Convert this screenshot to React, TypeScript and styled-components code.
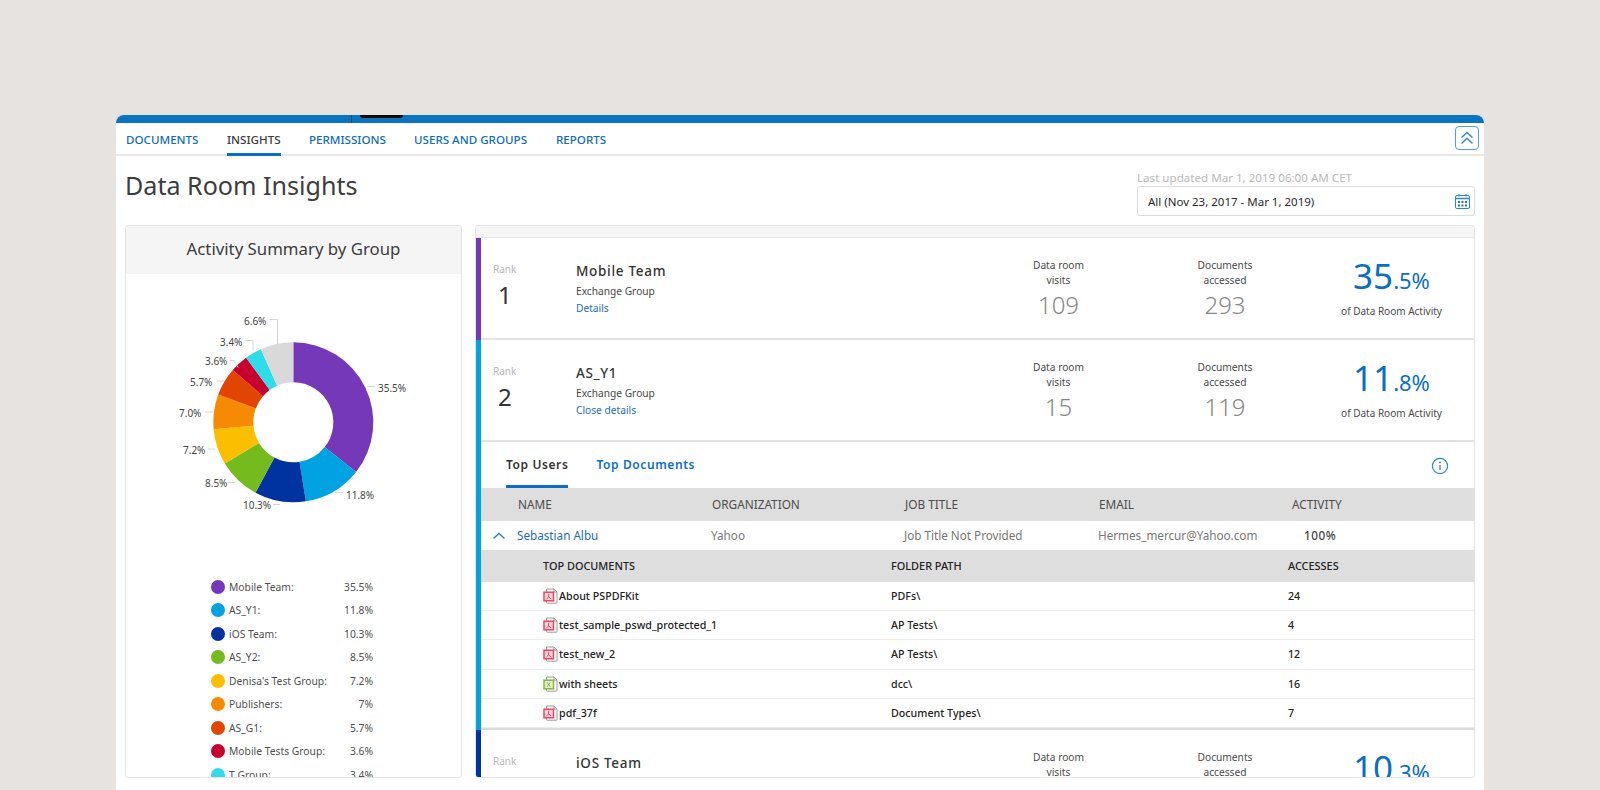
import React from "react";
import styled, { createGlobalStyle } from "styled-components";

const Global = createGlobalStyle`
  html, body { margin: 0; padding: 0; height: 790px; overflow: hidden; background: #e6e3e0; }
  body { font-family: "Noto Sans", "Open Sans", sans-serif; -webkit-font-smoothing: antialiased; }
  * { box-sizing: border-box; }
`;

const Page = styled.div`
  padding: 115px 116px 0;
  height: 790px;
`;
const Window = styled.div`
  position: relative;
  height: 675px;
  background: #fff;
  border-radius: 8px 8px 0 0;
  overflow: hidden;
`;
const TopBar = styled.div`
  position: relative;
  height: 8px;
  background: #0a74c0;
`;
const CameraNotch = styled.div`
  position: absolute;
  left: 244px;
  top: 0;
  width: 43px;
  height: 3px;
  background: #0b0b0b;
  border-radius: 0 0 3px 3px;
`;
const BarSeam = styled.div`
  position: absolute;
  left: 235px;
  top: 0;
  width: 1px;
  height: 8px;
  background: #0a4f80;
`;
const Nav = styled.nav`
  display: flex;
  align-items: stretch;
  height: 33px;
  padding: 0 5px 0 10px;
  border-bottom: 2px solid #e9e9e9;
`;
const NavLink = styled.a<{ $active?: boolean; $w: number }>`
  display: flex;
  align-items: center;
  height: 33px;
  width: ${(p) => p.$w}px;
  font-size: 11.6px;
  font-weight: 500;
  white-space: nowrap;
  color: ${(p) => (p.$active ? "#3c3c3c" : "#0e6cb8")};
`;
const NavLabel = styled.span<{ $active?: boolean }>`
  display: flex;
  align-items: center;
  height: 32px;
  margin-bottom: -1px;
  border-bottom: 3px solid ${(p) => (p.$active ? "#0a6fc2" : "transparent")};
  padding-top: 1px;
`;
const CollapseButton = styled.button`
  margin: 3px 0 0 auto;
  width: 24px;
  height: 24px;
  padding: 0;
  display: flex;
  align-items: center;
  justify-content: center;
  background: #fff;
  border: 1px solid #4f9fd9;
  border-radius: 4px;
`;
const Content = styled.div`
  padding: 0 9px;
`;
const TitleRow = styled.div`
  display: flex;
  justify-content: space-between;
  height: 69px;
`;
const Title = styled.h1`
  margin: 11px 0 0;
  font-size: 25.1px;
  line-height: 36px;
  font-weight: 400;
  color: #3d3d3d;
`;
const DateBlock = styled.div`
  width: 338px;
  padding-top: 14px;
`;
const Updated = styled.div`
  font-size: 11.6px;
  line-height: 16px;
  color: #b9b9b9;
`;
const DateField = styled.div`
  display: flex;
  align-items: center;
  justify-content: space-between;
  height: 30px;
  padding: 0 3px 0 10px;
  border: 1px solid #dcdcdc;
  border-radius: 3px;
  font-size: 11.5px;
  color: #2a2a2a;
`;
const Columns = styled.div`
  display: grid;
  grid-template-columns: 337px 1000px;
  column-gap: 13px;
`;
const LeftCard = styled.section`
  height: 553px;
  overflow: hidden;
  border: 1px solid #e4e4e4;
  border-radius: 3px;
`;
const CardHeader = styled.h2`
  margin: 0;
  height: 48px;
  padding-bottom: 4px;
  display: flex;
  align-items: center;
  justify-content: center;
  background: #f6f5f5;
  font-size: 16.8px;
  font-weight: 400;
  color: #3c3c3c;
`;
const ChartSvg = styled.svg`
  display: block;
  width: 335px;
  height: 301px;
`;
const Legend = styled.ul`
  list-style: none;
  margin: 0;
  padding: 0 0 0 85px;
`;
const LegendRow = styled.li`
  display: flex;
  align-items: center;
  width: 162px;
  height: 23.5px;
  font-size: 10.3px;
  color: #505050;
  white-space: nowrap;
`;
const Dot = styled.span<{ $c: string }>`
  flex: none;
  width: 14px;
  height: 14px;
  margin-right: 4px;
  border-radius: 50%;
  background: ${(p) => p.$c};
`;
const LegendValue = styled.span`
  margin-left: auto;
`;
const RightCard = styled.section`
  height: 553px;
  overflow: hidden;
  border: 1px solid #e4e4e4;
  border-radius: 3px;
  background: #fff;
`;
const RightStrip = styled.div`
  height: 12px;
  background: #f6f5f5;
  border-bottom: 1px solid #e8e8e8;
`;
const Group = styled.div<{ $c: string }>`
  border-left: 5px solid ${(p) => p.$c};
`;
const Row = styled.div`
  display: grid;
  grid-template-columns: 83px 400px 165px 168px 1fr;
  height: 102px;
  padding-left: 12px;
  border-bottom: 2px solid #e3e3e3;
`;
const RankCell = styled.div`
  padding-top: 24px;
`;
const RankLabel = styled.div`
  font-size: 10px;
  line-height: 15px;
  color: #b8b8b8;
`;
const RankValue = styled.div`
  font-size: 24px;
  line-height: 33px;
  margin: 1px 0 0 5px;
  color: #333;
`;
const NameCell = styled.div`
  padding-top: 23px;
`;
const TeamName = styled.div`
  font-size: 13.5px;
  line-height: 20px;
  font-weight: 500;
  letter-spacing: 0.7px;
  color: #333;
`;
const TeamKind = styled.div`
  font-size: 10.2px;
  line-height: 17px;
  margin-top: 2px;
  color: #484848;
`;
const DetailsLink = styled.a`
  display: block;
  font-size: 10.2px;
  line-height: 17px;
  color: #1a6db5;
`;
const StatCell = styled.div`
  padding-top: 20px;
  text-align: center;
`;
const StatLabel = styled.div`
  font-size: 10.2px;
  line-height: 15px;
  color: #4a4a4a;
`;
const StatValue = styled.div`
  font-size: 24px;
  line-height: 34px;
  font-weight: 300;
  color: #878787;
`;
const PctCell = styled.div`
  padding-top: 17px;
  text-align: center;
`;
const PctValue = styled.div`
  font-size: 35px;
  line-height: 42px;
  color: #0a6fc2;
`;
const PctSmall = styled.span`
  font-size: 22px;
`;
const PctCaption = styled.div`
  margin-top: 3px;
  font-size: 10px;
  line-height: 15px;
  color: #4a4a4a;
`;
const Tabs = styled.div`
  display: flex;
  align-items: stretch;
  height: 46px;
  padding: 0 25px 0 25px;
`;
const Tab = styled.a<{ $active?: boolean }>`
  display: flex;
  align-items: center;
  margin-right: 28px;
  padding-top: 1px;
  font-size: 12px;
  font-weight: 600;
  letter-spacing: 0.6px;
  border-bottom: 3px solid ${(p) => (p.$active ? "#0a6fc2" : "transparent")};
  color: ${(p) => (p.$active ? "#333" : "#0a6fc2")};
`;
const InfoIcon = styled.svg`
  margin: 15px 0 0 auto;
`;
const UsersHead = styled.div`
  display: grid;
  grid-template-columns: 194px 193px 194px 193px 1fr;
  align-items: center;
  height: 33px;
  padding: 0 0 2px 37px;
  background: #dedede;
  font-size: 11.8px;
  color: #4c4c4c;
`;
const UsersRow = styled.div`
  display: grid;
  grid-template-columns: 194px 193px 194px 193px 1fr;
  align-items: center;
  height: 29px;
  padding: 0 0 2px 36px;
  font-size: 11.7px;
  color: #777;
`;
const UserName = styled.a`
  position: relative;
  color: #1a6db5;
`;
const Chevron = styled.svg`
  position: absolute;
  left: -25px;
  top: 4px;
`;
const ActivityCell = styled.span`
  padding: 0 0 0 13px;
  font-weight: 500;
  letter-spacing: 0.6px;
  color: #444;
`;
const DocsHead = styled.div`
  display: grid;
  grid-template-columns: 348px 397px 1fr;
  align-items: center;
  height: 31.5px;
  padding-left: 62px;
  background: #dedede;
  font-size: 10.9px;
  font-weight: 500;
  color: #222;
`;
const DocRow = styled.div`
  display: grid;
  grid-template-columns: 348px 397px 1fr;
  align-items: center;
  height: 29.4px;
  padding-left: 62px;
  border-bottom: 1.5px solid #ededed;
  font-size: 10.7px;
  font-weight: 500;
  color: #222;
`;
const DocName = styled.span`
  display: flex;
  align-items: center;
`;
const GroupEnd = styled.div`
  height: 2px;
  background: #dcdcdc;
`;

function FileIcon({ kind }: { kind: "pdf" | "xls" }) {
  const c = kind === "pdf" ? "#ee4560" : "#84b83a";
  const fill = kind === "pdf" ? "#fbd5da" : "#e3efcf";
  return (
    <svg width="16" height="16" viewBox="0 0 16 16" fill="none">
      <path d="M3.5 1h7.5l3 3v10.5a.7.7 0 0 1-.7.7H4.2a.7.7 0 0 1-.7-.7z" fill="#fff" stroke="#9a9a9a" />
      <path d="M11 1v3h3" stroke="#9a9a9a" />
      <rect x="1" y="4.2" width="9.5" height="8.6" fill={fill} stroke={c} strokeWidth="1.5" />
      {kind === "pdf" ? (
        <path d="M5.7 5.8v3.2M3.4 11l2.3-2 2.4 2" stroke={c} strokeWidth="1" />
      ) : (
        <path d="M4.2 6.4l3 4.4M7.2 6.4l-3 4.4" stroke={c} strokeWidth="1" />
      )}
    </svg>
  );
}

const slices = [
  { name: "Mobile Team", v: 35.5, legend: "35.5%", c: "#7438b9" },
  { name: "AS_Y1", v: 11.8, legend: "11.8%", c: "#00a2e1" },
  { name: "iOS Team", v: 10.3, legend: "10.3%", c: "#0033a0" },
  { name: "AS_Y2", v: 8.5, legend: "8.5%", c: "#74bb1e" },
  { name: "Denisa's Test Group", v: 7.2, legend: "7.2%", c: "#fbbe00" },
  { name: "Publishers", v: 7.0, legend: "7%", c: "#f68b03" },
  { name: "AS_G1", v: 5.7, legend: "5.7%", c: "#e24500" },
  { name: "Mobile Tests Group", v: 3.6, legend: "3.6%", c: "#c8002f" },
  { name: "T Group", v: 3.4, legend: "3.4%", c: "#2fdcea" },
  { name: "Other", v: 6.6, legend: "6.6%", c: "#d9d9d9" },
];

const CX = 293.3;
const CY = 422.3;
const R = 80;
const r = 40;

function slicePath(a0: number, a1: number) {
  const p = (rad: number, a: number) =>
    `${(CX + rad * Math.sin(a)).toFixed(2)} ${(CY - rad * Math.cos(a)).toFixed(2)}`;
  const large = a1 - a0 > Math.PI ? 1 : 0;
  return `M${p(R, a0)}A${R} ${R} 0 ${large} 1 ${p(R, a1)}L${p(r, a1)}A${r} ${r} 0 ${large} 0 ${p(r, a0)}Z`;
}

const chartLabels = [
  { t: "35.5%", x: 378, y: 388.5, d: "M367 386.5h8" },
  { t: "11.8%", x: 346, y: 495.5, d: "M335 492.5h8" },
  { t: "10.3%", x: 243, y: 505, d: "M273 504.5h7" },
  { t: "8.5%", x: 205, y: 483.5, d: "M228 482.5h7" },
  { t: "7.2%", x: 183, y: 450, d: "M208 449h7" },
  { t: "7.0%", x: 179, y: 413, d: "M205 412h8" },
  { t: "5.7%", x: 190, y: 382, d: "M217 381h7" },
  { t: "3.6%", x: 205, y: 361.5, d: "M230 360.5h4l4 7" },
  { t: "3.4%", x: 220, y: 342, d: "M246 340.5h7v10" },
  { t: "6.6%", x: 244, y: 321, d: "M270 319.5h7.5v25" },
];

const docs = [
  { kind: "pdf" as const, name: "About PSPDFKit", path: "PDFs\\", n: 24 },
  { kind: "pdf" as const, name: "test_sample_pswd_protected_1", path: "AP Tests\\", n: 4 },
  { kind: "pdf" as const, name: "test_new_2", path: "AP Tests\\", n: 12 },
  { kind: "xls" as const, name: "with sheets", path: "dcc\\", n: 16 },
  { kind: "pdf" as const, name: "pdf_37f", path: "Document Types\\", n: 7 },
];

function Stats({ rank, name, link, visits, accessed, pct, dec }: {
  rank: number; name: string; link: string; visits: number; accessed: number; pct: string; dec: string;
}) {
  return (
    <Row>
      <RankCell>
        <RankLabel>Rank</RankLabel>
        <RankValue>{rank}</RankValue>
      </RankCell>
      <NameCell>
        <TeamName>{name}</TeamName>
        <TeamKind>Exchange Group</TeamKind>
        <DetailsLink>{link}</DetailsLink>
      </NameCell>
      <StatCell>
        <StatLabel>Data room<br />visits</StatLabel>
        <StatValue>{visits}</StatValue>
      </StatCell>
      <StatCell>
        <StatLabel>Documents<br />accessed</StatLabel>
        <StatValue>{accessed}</StatValue>
      </StatCell>
      <PctCell>
        <PctValue>{pct}<PctSmall>{dec}</PctSmall></PctValue>
        <PctCaption>of Data Room Activity</PctCaption>
      </PctCell>
    </Row>
  );
}

export default function App() {
  let acc = 0;
  const total = slices.reduce((s, x) => s + x.v, 0);
  return (
    <Page>
      <Global />
      <Window>
        <TopBar>
          <BarSeam />
          <CameraNotch />
        </TopBar>
        <Nav>
          <NavLink $w={101}><NavLabel>DOCUMENTS</NavLabel></NavLink>
          <NavLink $w={82} $active><NavLabel $active>INSIGHTS</NavLabel></NavLink>
          <NavLink $w={105}><NavLabel>PERMISSIONS</NavLabel></NavLink>
          <NavLink $w={142}><NavLabel>USERS AND GROUPS</NavLabel></NavLink>
          <NavLink $w={60}><NavLabel>REPORTS</NavLabel></NavLink>
          <CollapseButton aria-label="Collapse">
            <svg width="16" height="16" viewBox="0 0 16 16" fill="none" stroke="#2b86cb" strokeWidth="1.3">
              <path d="M2.5 7.5L8 2.5l5.5 5M2.5 13.5L8 8.5l5.5 5" />
            </svg>
          </CollapseButton>
        </Nav>
        <Content>
          <TitleRow>
            <Title>Data Room Insights</Title>
            <DateBlock>
              <Updated>Last updated Mar 1, 2019 06:00 AM CET</Updated>
              <DateField>
                All (Nov 23, 2017 - Mar 1, 2019)
                <svg width="17" height="17" viewBox="0 0 17 17" fill="none">
                  <rect x="1.5" y="2.5" width="14" height="13" rx="1.5" stroke="#2b86cb" />
                  <path d="M1.5 5.5h14" stroke="#2b86cb" strokeWidth="1.4" />
                  <path d="M5 1v2.5M12 1v2.5" stroke="#2b86cb" />
                  <path d="M4 8h2v2H4zM7.5 8h2v2h-2zM11 8h2v2h-2zM4 11.5h2v2H4zM7.5 11.5h2v2h-2zM11 11.5h2v2h-2z" fill="#2b6fa8" />
                </svg>
              </DateField>
            </DateBlock>
          </TitleRow>
          <Columns>
            <LeftCard>
              <CardHeader>Activity Summary by Group</CardHeader>
              <ChartSvg viewBox="126 274 335 301">
                {slices.map((s) => {
                  const a0 = (acc / total) * Math.PI * 2;
                  acc += s.v;
                  const a1 = (acc / total) * Math.PI * 2;
                  return <path key={s.name} d={slicePath(a0, a1)} fill={s.c} />;
                })}
                {chartLabels.map((l) => (
                  <g key={l.t}>
                    <path d={l.d} stroke="#d4d4d4" fill="none" />
                    <text x={l.x} y={l.y + 3.5} fontSize="10" fill="#444" fontFamily="Noto Sans">{l.t}</text>
                  </g>
                ))}
              </ChartSvg>
              <Legend>
                {slices.slice(0, 9).map((s) => (
                  <LegendRow key={s.name}>
                    <Dot $c={s.c} />
                    {s.name}:
                    <LegendValue>{s.legend}</LegendValue>
                  </LegendRow>
                ))}
              </Legend>
            </LeftCard>
            <RightCard>
              <RightStrip />
              <Group $c="#7438b9">
                <Stats rank={1} name="Mobile Team" link="Details" visits={109} accessed={293} pct="35" dec=".5%" />
              </Group>
              <Group $c="#00a2e1">
                <Stats rank={2} name="AS_Y1" link="Close details" visits={15} accessed={119} pct="11" dec=".8%" />
                <Tabs>
                  <Tab $active>Top Users</Tab>
                  <Tab>Top Documents</Tab>
                  <InfoIcon width="18" height="18" viewBox="0 0 18 18" fill="none" stroke="#2b86cb">
                    <circle cx="9" cy="9" r="7.6" strokeWidth="1.2" />
                    <path d="M9 8v5" strokeWidth="1.3" />
                    <circle cx="9" cy="5.5" r="0.6" fill="#2b86cb" />
                  </InfoIcon>
                </Tabs>
                <UsersHead>
                  <span>NAME</span>
                  <span>ORGANIZATION</span>
                  <span>JOB TITLE</span>
                  <span>EMAIL</span>
                  <span>ACTIVITY</span>
                </UsersHead>
                <UsersRow>
                  <UserName>
                    <Chevron width="14" height="10" viewBox="0 0 14 10" fill="none" stroke="#2b7cc0" strokeWidth="1.3">
                      <path d="M1.5 7.5L7 2.5l5.5 5" />
                    </Chevron>
                    Sebastian Albu
                  </UserName>
                  <span>Yahoo</span>
                  <span>Job Title Not Provided</span>
                  <span>Hermes_mercur@Yahoo.com</span>
                  <ActivityCell>100%</ActivityCell>
                </UsersRow>
                <DocsHead>
                  <span>TOP DOCUMENTS</span>
                  <span>FOLDER PATH</span>
                  <span>ACCESSES</span>
                </DocsHead>
                {docs.map((d) => (
                  <DocRow key={d.name}>
                    <DocName><FileIcon kind={d.kind} />{d.name}</DocName>
                    <span>{d.path}</span>
                    <span>{d.n}</span>
                  </DocRow>
                ))}
                <GroupEnd />
              </Group>
              <Group $c="#0033a0">
                <Stats rank={3} name="iOS Team" link="Details" visits={98} accessed={141} pct="10" dec=".3%" />
              </Group>
            </RightCard>
          </Columns>
        </Content>
      </Window>
    </Page>
  );
}
